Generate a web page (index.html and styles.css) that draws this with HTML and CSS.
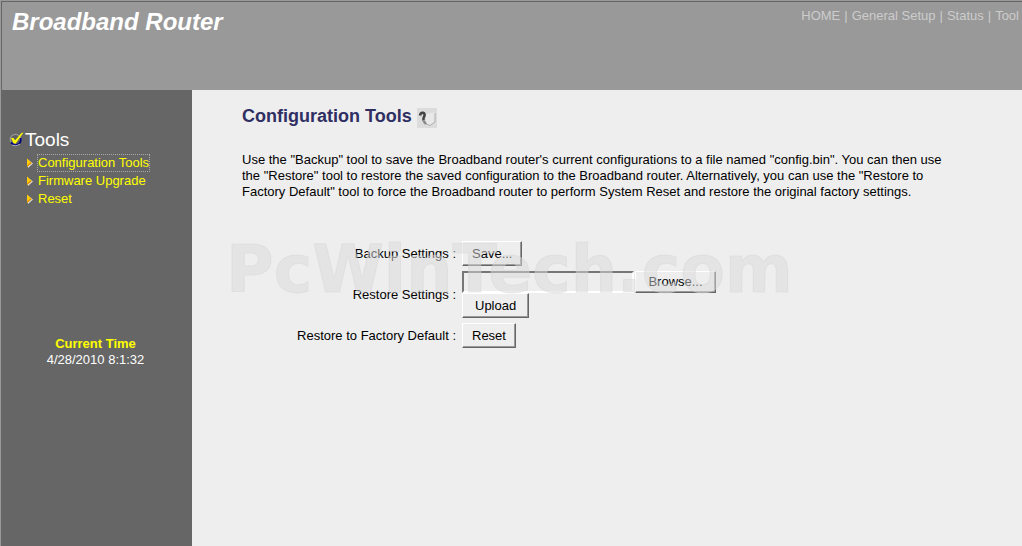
FILE: index.html
```html
<!DOCTYPE html>
<html lang="en">
<head>
<meta charset="utf-8">
<title>Broadband Router</title>
<link rel="stylesheet" href="styles.css">
</head>
<body>
<div class="frame">
  <header class="header">
    <h1 class="brand">Broadband Router</h1>
    <nav class="topnav">
      <a href="#home">HOME</a><span class="sep">|</span><a href="#setup">General Setup</a><span class="sep">|</span><a href="#status">Status</a><span class="sep">|</span><a href="#tool">Tool</a>
    </nav>
  </header>
  <div class="body">
    <aside class="sidebar">
      <h2 class="side-title">
        <svg class="check" viewBox="0 0 16 16" width="16" height="16" aria-hidden="true">
          <circle cx="6.5" cy="7.5" r="5.2" fill="#606060" stroke="#999" stroke-width="1.2"/>
          <path d="M2 10.5A5.4 5.4 0 0 0 11.8 8.5V6" fill="none" stroke="#000080" stroke-width="1.6"/>
          <path d="M3 13Q6.5 15 11 12.2" fill="none" stroke="#ccc" stroke-width=".8"/>
          <path d="M2 6L4.5 6L6 8.4L12.5 1L14.5 .5L6.5 11.8L4.5 11Z" fill="#ff0"/>
        </svg>Tools
      </h2>
      <ul class="menu">
        <li><svg class="arrow" viewBox="0 0 6 10" width="6" height="10" aria-hidden="true"><path d="M0 1L6 5.5L1 10Z" fill="#ddd"/><path d="M0 0.5L4.8 5L0 9Z" fill="#fc0"/><path d="M0 9L4.8 5L3.5 4.6L0 7.6Z" fill="#d80"/></svg><a class="current" href="#config">Configuration Tools</a></li>
        <li><svg class="arrow" viewBox="0 0 6 10" width="6" height="10" aria-hidden="true"><path d="M0 1L6 5.5L1 10Z" fill="#ddd"/><path d="M0 0.5L4.8 5L0 9Z" fill="#fc0"/><path d="M0 9L4.8 5L3.5 4.6L0 7.6Z" fill="#d80"/></svg><a href="#firmware">Firmware Upgrade</a></li>
        <li><svg class="arrow" viewBox="0 0 6 10" width="6" height="10" aria-hidden="true"><path d="M0 1L6 5.5L1 10Z" fill="#ddd"/><path d="M0 0.5L4.8 5L0 9Z" fill="#fc0"/><path d="M0 9L4.8 5L3.5 4.6L0 7.6Z" fill="#d80"/></svg><a href="#reset">Reset</a></li>
      </ul>
      <div class="clock"><strong>Current Time</strong><span>4/28/2010 8:1:32</span></div>
    </aside>
    <main class="content">
      <h2 class="title">Configuration Tools
        <svg class="help" viewBox="0 0 20 20" width="20" height="20" aria-hidden="true">
          <rect width="20" height="20" fill="#dcdcdc"/>
          <path d="M9 6L18 4V14L13 17L9 15Z" fill="#e8e8e8"/>
          <path d="M18 5V14L13 17.5L9 16" fill="none" stroke="#b0b0b0"/>
          <path d="M3 7.5Q3.5 4.5 6 4.8Q8.5 5.5 7.2 8.4Q6 10.5 6.5 12.5" fill="none" stroke="#444" stroke-width="2.6"/>
          <path d="M6.5 13L9 16" stroke="#888" stroke-width="2.4"/>
        </svg>
      </h2>
      <p class="intro">Use the "Backup" tool to save the Broadband router's current configurations to a file named "config.bin". You can then use the "Restore" tool to restore the saved configuration to the Broadband router. Alternatively, you can use the "Restore to Factory Default" tool to force the Broadband router to perform System Reset and restore the original factory settings.</p>
      <form class="form">
        <label for="save">Backup Settings :</label>
        <div class="field"><button id="save" type="button">Save...</button></div>
        <label for="file">Restore Settings :</label>
        <div class="field">
          <div class="picker"><input id="file" type="text"><button class="browse" type="button">Browse...</button></div>
          <button type="button" class="upload">Upload</button>
        </div>
        <label for="reset-default">Restore to Factory Default :</label>
        <div class="field"><button id="reset-default" type="button">Reset</button></div>
        <div class="watermark">PcWinTech.com</div>
      </form>
    </main>
  </div>
</div>
</body>
</html>
```
FILE: styles.css
```css
* { box-sizing: border-box; }
body {
  margin: 0;
  font: 13px/16px "Liberation Sans", Arial, sans-serif;
  color: #000;
  background: #eee;
}
a { color: inherit; text-decoration: none; }
h1, h2, p, ul { margin: 0; padding: 0; }
.frame {
  display: flex;
  flex-direction: column;
  min-height: 100vh;
  border-top: 1px solid #999;
  border-left: 1px solid #999;
}
.header {
  display: flex;
  justify-content: space-between;
  align-items: flex-start;
  height: 89px;
  padding: 6px 3px 0 10px;
  background: #999;
  border-top: 1px solid #666;
  border-left: 1px solid #666;
}
.brand { font: italic bold 24px/28px "Liberation Sans", Arial, sans-serif; color: #fff; }
.topnav { color: #ccc; white-space: nowrap; }
.sep { margin: 0 4px; }
.body { display: flex; flex: 1; }
.sidebar { flex: 0 0 191px; padding: 38px 0 0 8px; background: #666; color: #fff; }
.side-title { display: flex; align-items: center; font-size: 19px; font-weight: normal; line-height: 24px; }
.menu { list-style: none; color: #ff0; padding: 2px 0 0 18px; }
.menu li { display: flex; align-items: center; height: 18px; }
.arrow { margin-right: 5px; }
.current { outline: 1px dotted #aaa; }
.clock { display: flex; flex-direction: column; align-items: center; margin: 128px 10px 0 0; }
.clock strong { color: #ff0; }
.content { flex: 1; padding: 14px 50px 0; }
.title { display: flex; align-items: center; gap: 5px; font-size: 18px; line-height: 24px; color: #2f2f63; }
.help { margin-top: 3px; }
.intro { max-width: 720px; margin-top: 24px; }
.form {
  position: relative;
  display: grid;
  grid-template-columns: 214px 1fr;
  column-gap: 6px;
  row-gap: 5px;
  align-items: center;
  margin-top: 41px;
}
.form label { text-align: right; }
button, input {
  display: block;
  height: 25px;
  margin: 0;
  border: 1px solid;
  border-color: #fff #666 #666 #fff;
  background: #eee;
  color: #000;
  font: 13px/16px "Liberation Sans", Arial, sans-serif;
}
button {
  padding: 0 9px;
  box-shadow: inset -1px -1px #999;
}
input { width: 172px; height: 22px; border-width: 2px; border-color: #777 #fff #fff #777; }
.picker { display: flex; gap: 1px; }
.browse { height: 22px; width: 81px; }
.upload { padding: 0 12px; }
.watermark {
  position: absolute;
  left: -16px;
  top: -11px;
  font: bold 65px/80px "DejaVu Sans", Verdana, sans-serif;
  color: rgba(218, 218, 218, .5);
  -webkit-text-stroke: 1px rgba(212, 212, 212, .4);
  white-space: nowrap;
  pointer-events: none;
}
```
